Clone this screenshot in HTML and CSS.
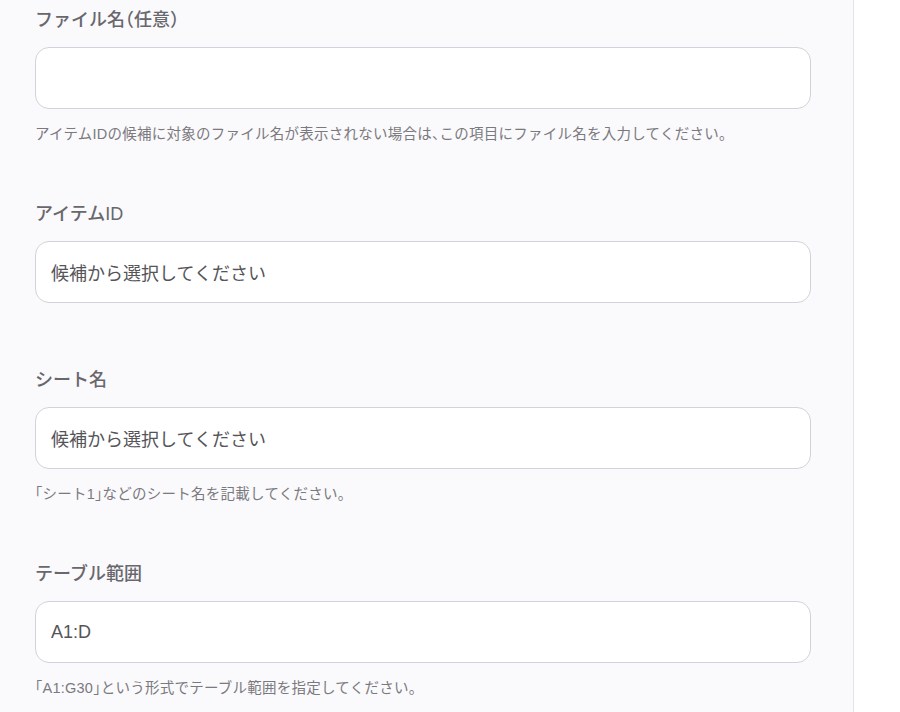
FILE: index.html
```html
<!DOCTYPE html>
<html lang="ja">
<head>
  <meta charset="UTF-8" />
  <meta name="viewport" content="width=device-width, initial-scale=1.0"/>
  <title>テーブル設定</title>
  <link rel="stylesheet" href="styles.css">
</head>
<body>

  <div class="layout">
    <div class="panel">

      <div class="field">
        <label class="field-label">ファイル名（任意）</label>
        <div class="field-input"></div>
        <p class="field-help">アイテムIDの候補に対象のファイル名が表示されない場合は、この項目にファイル名を入力してください。</p>
      </div>

      <div class="field no-help">
        <label class="field-label">アイテムID</label>
        <div class="field-input placeholder">候補から選択してください</div>
      </div>

      <div class="field">
        <label class="field-label">シート名</label>
        <div class="field-input placeholder">候補から選択してください</div>
        <p class="field-help">「シート1」などのシート名を記載してください。</p>
      </div>

      <div class="field">
        <label class="field-label">テーブル範囲</label>
        <div class="field-input">A1:D</div>
        <p class="field-help">「A1:G30」という形式でテーブル範囲を指定してください。</p>
      </div>

    </div>
    <div class="side"></div>
  </div>

</body>
</html>
```

FILE: styles.css
```css
body {
  margin: 0;
  background-color: #ffffff;
  font-family: "Liberation Sans", "Noto Sans CJK JP", sans-serif;
  font-feature-settings: "halt";
  overflow: hidden;
}

.layout {
  display: flex;
  min-height: 100vh;
}

.panel {
  width: 776px;
  flex-shrink: 0;
  padding: 8px 42px 40px 35px;
  background-color: #faf9fc;
  border-right: 1px solid #e3e2e6;
}

.side {
  flex: 1;
}

.field {
  margin-bottom: 59px;
}

.field.no-help {
  margin-bottom: 65px;
}

.field-label {
  display: block;
  height: 24px;
  line-height: 24px;
  margin-bottom: 15px;
  font-size: 18px;
  font-weight: 500;
  color: #68676c;
}

.field-input {
  box-sizing: border-box;
  height: 62px;
  padding: 0 15px;
  display: flex;
  align-items: center;
  background-color: #ffffff;
  border: 1px solid #d3d2da;
  border-radius: 14px;
  font-size: 18px;
  color: #555458;
}

.field-help {
  margin: 16px 0 0;
  height: 18px;
  line-height: 18px;
  font-size: 14.5px;
  letter-spacing: 0.25px;
  color: #7a797d;
}
```
